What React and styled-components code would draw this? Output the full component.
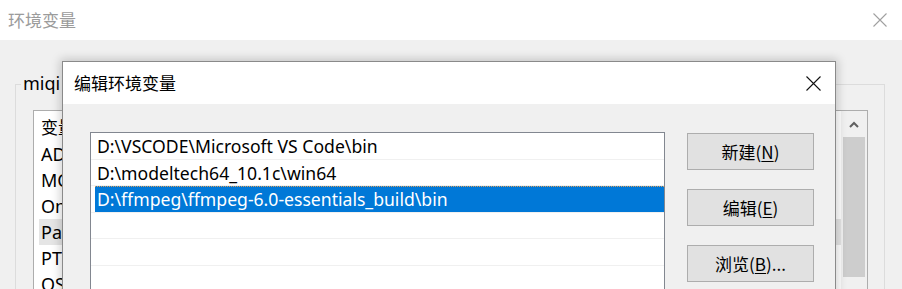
import React from "react";
import styled, { createGlobalStyle } from "styled-components";

const Global = createGlobalStyle`
  html, body { margin: 0; padding: 0; background: #f0f0f0; }
  body { font-family: "Noto Sans", "Noto Sans CJK SC", sans-serif; }
  * { box-sizing: border-box; }
`;

const FONT = `"Noto Sans", "Noto Sans CJK SC", sans-serif`;

const Screen = styled.div`
  position: relative;
  width: 902px;
  height: 289px;
  overflow: hidden;
  font-family: ${FONT};
`;

const BackWindow = styled.div`
  display: flex;
  flex-direction: column;
  width: 902px;
  height: 289px;
`;

const TitleBar = styled.div`
  display: flex;
  align-items: center;
  justify-content: space-between;
  height: ${(p) => p.$h}px;
  flex: none;
  background: #fff;
  padding: 0 ${(p) => p.$pr}px 0 ${(p) => p.$pl}px;
`;

const TitleText = styled.span`
  font-size: 17px;
  color: ${(p) => (p.$inactive ? "#9b9b9b" : "#000")};
  line-height: 1;
`;

const CloseIcon = ({ color, size }) => (
  <svg width={size} height={size} viewBox={`0 0 ${size} ${size}`}>
    <path d={`M0.5 0.5 L${size - 0.5} ${size - 0.5} M${size - 0.5} 0.5 L0.5 ${size - 0.5}`} stroke={color} strokeWidth="1.1" fill="none" />
  </svg>
);

const BackBody = styled.div`
  flex: 1;
  background: #f0f0f0;
  padding: 44px 17px 0 15px;
  display: flex;
  min-height: 0;
`;

const GroupBox = styled.div`
  flex: 1;
  border: 1px solid #dcdcdc;
  border-bottom: none;
  padding: 0 16px 0 17px;
  display: flex;
  flex-direction: column;
`;

const Legend = styled.div`
  align-self: flex-start;
  margin: -13px 0 0 -12px;
  padding: 0 2px;
  background: #f0f0f0;
  font-size: 18px;
  line-height: 22px;
  color: #000;
`;

const BackList = styled.div`
  margin-top: 3px;
  flex: 1;
  background: #fff;
  border: 1px solid #adadad;
  border-bottom: none;
  display: flex;
  margin-top: 16px;
`;

const BackColumn = styled.div`
  flex: 1;
  display: flex;
  flex-direction: column;
`;

const BackHeader = styled.div`
  height: 30px;
  flex: none;
  padding-left: 7px;
  display: flex;
  align-items: center;
  font-size: 17px;
`;

const BackRow = styled.div`
  height: 26px;
  flex: none;
  margin-left: 5px;
  padding-left: 2px;
  display: flex;
  align-items: center;
  font-size: 18px;
  background: ${(p) => (p.$selected ? "#e5e5e5" : "transparent")};
`;

const ScrollBar = styled.div`
  width: 26px;
  flex: none;
  background: #f0f0f0;
  display: flex;
  flex-direction: column;
  align-items: center;
  padding: 0 2px 0 2px;
`;

const ScrollArrow = styled.div`
  height: 26px;
  flex: none;
  width: 100%;
  display: flex;
  align-items: center;
  justify-content: center;
`;

const ScrollThumb = styled.div`
  width: 22px;
  height: 140px;
  flex: none;
  background: #cdcdcd;
`;

const Dialog = styled.div`
  position: absolute;
  left: 62px;
  top: 61px;
  width: 774px;
  height: 260px;
  background: #f0f0f0;
  border: 1px solid #8a8a8a;
  box-shadow: 0 0 9px 2px rgba(0, 0, 0, 0.18);
  display: flex;
  flex-direction: column;
`;

const DialogBody = styled.div`
  flex: 1;
  display: flex;
  padding: 28px 21px 0 27px;
  gap: 22px;
`;

const PathList = styled.div`
  width: 576px;
  height: 200px;
  background: #fff;
  border: 1px solid #828790;
  border-bottom: none;
  display: flex;
  flex-direction: column;
`;

const PathRow = styled.div`
  height: 26.5px;
  flex: none;
  border-bottom: 1px solid #f0f0f0;
  padding-left: 4px;
  display: flex;
`;

const PathCell = styled.div`
  flex: 1;
  display: flex;
  align-items: center;
  padding-left: 2px;
  font-size: 17.6px;
  color: ${(p) => (p.$selected ? "#fff" : "#000")};
  background: ${(p) => (p.$selected ? "#0078d7" : "transparent")};
  border-top: 1px dotted ${(p) => (p.$selected ? "#d9a060" : "transparent")};
  white-space: nowrap;
`;

const ButtonColumn = styled.div`
  display: flex;
  flex-direction: column;
  gap: 19px;
  padding-top: 1px;
`;

const Button = styled.div`
  width: 127px;
  height: 37px;
  background: #e1e1e1;
  border: 1px solid #adadad;
  display: flex;
  align-items: center;
  justify-content: center;
  font-size: 17px;
  color: #000;
  font-family: "Noto Sans CJK SC", ${FONT};
`;

const Key = styled.span`
  text-decoration: underline;
  text-underline-offset: 2px;
`;

const backRows = ["AD", "MC", "On", "Pat", "PTS", "OS"];
const paths = [
  "D:\\VSCODE\\Microsoft VS Code\\bin",
  "D:\\modeltech64_10.1c\\win64",
  "D:\\ffmpeg\\ffmpeg-6.0-essentials_build\\bin",
  "",
  "",
  "",
];

export default function App() {
  return (
    <Screen>
      <Global />
      <BackWindow>
        <TitleBar $h={40} $pl={8} $pr={15}>
          <TitleText $inactive>环境变量</TitleText>
          <CloseIcon color="#a0a0a0" size={14} />
        </TitleBar>
        <BackBody>
          <GroupBox>
            <Legend>miqi</Legend>
            <BackList>
              <BackColumn>
                <BackHeader>变量</BackHeader>
                {backRows.map((r) => (
                  <BackRow key={r} $selected={r === "Pat"}>
                    {r}
                  </BackRow>
                ))}
              </BackColumn>
              <ScrollBar>
                <ScrollArrow>
                  <svg width="10" height="7" viewBox="0 0 10 7">
                    <path d="M1 6 L5 2 L9 6" stroke="#606060" strokeWidth="2" fill="none" />
                  </svg>
                </ScrollArrow>
                <ScrollThumb />
              </ScrollBar>
            </BackList>
          </GroupBox>
        </BackBody>
      </BackWindow>
      <Dialog>
        <TitleBar $h={42} $pl={11} $pr={14}>
          <TitleText>编辑环境变量</TitleText>
          <CloseIcon color="#111" size={15} />
        </TitleBar>
        <DialogBody>
          <PathList>
            {paths.map((p, i) => (
              <PathRow key={i}>
                <PathCell $selected={i === 2}>{p}</PathCell>
              </PathRow>
            ))}
          </PathList>
          <ButtonColumn>
            <Button>
              新建(<Key>N</Key>)
            </Button>
            <Button>
              编辑(<Key>E</Key>)
            </Button>
            <Button>
              浏览(<Key>B</Key>)...
            </Button>
          </ButtonColumn>
        </DialogBody>
      </Dialog>
    </Screen>
  );
}
